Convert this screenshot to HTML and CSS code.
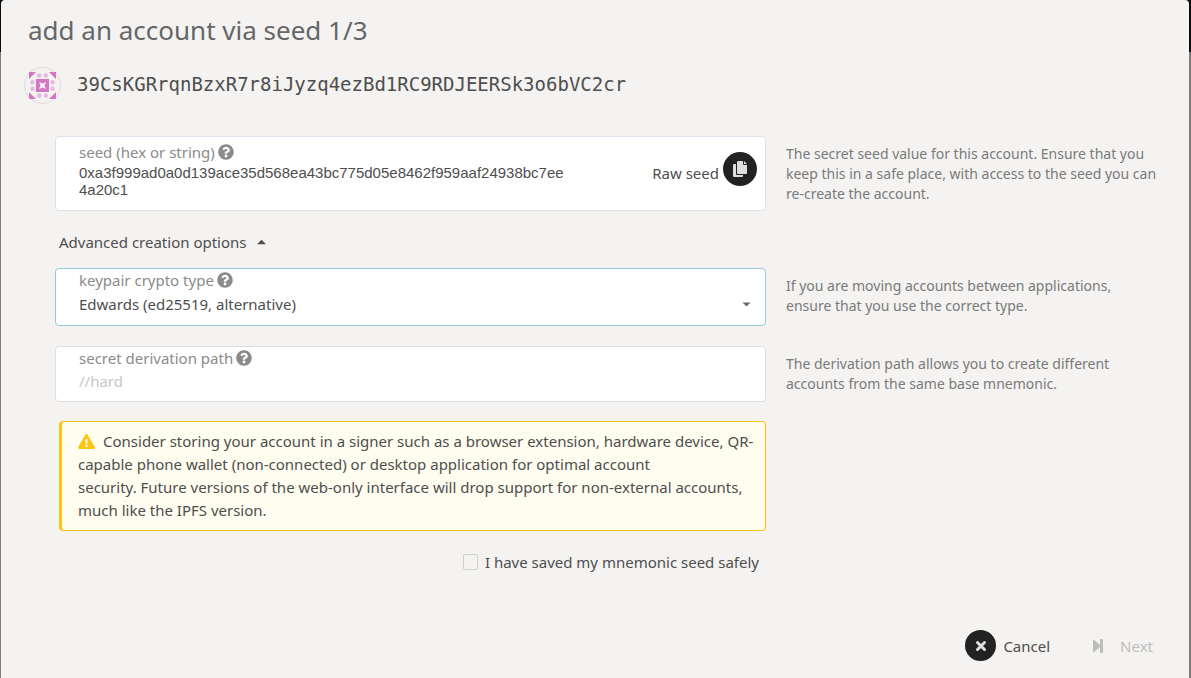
FILE: index.html
```html
<!DOCTYPE html>
<html lang="en">
<head>
<meta charset="utf-8">
<title>Add an account via seed</title>
<link rel="stylesheet" href="styles.css">
</head>
<body>
<svg class="defs" width="0" height="0" aria-hidden="true">
  <symbol id="help" viewBox="0 0 512 512"><path fill="currentColor" d="M504 256c0 137-111 248-248 248S8 393 8 256 119 8 256 8s248 111 248 248zM262.700 90c-54.500 0-89.300 23-116.500 63.800-3.500 5.300-2.400 12.400 2.700 16.300l34.700 26.300c5.200 3.900 12.600 3 16.700-2.100 17.900-22.700 30.100-35.800 57.300-35.800 20.400 0 45.700 13.100 45.700 33 0 15-12.400 22.700-32.500 34C247.100 238.500 216 254.900 216 296v4c0 6.600 5.400 12 12 12h56c6.600 0 12-5.400 12-12v-1.300c0-28.500 83.200-29.600 83.200-106.700 0-58-60.200-102-116.500-102zM256 338c-25.400 0-46 20.600-46 46s20.600 46 46 46 46-20.600 46-46-20.600-46-46-46z"/></symbol>
</svg>
<main class="dialog">
  <h1 class="title">add an account via seed 1/3</h1>
  <div class="account">
    <svg class="identicon" viewBox="0 0 37 37" aria-hidden="true">
      <circle cx="18.500" cy="18.500" r="18" fill="#f4f3f1" stroke="#dddcda"/>
      <g fill="#d376c3"><path d="M5 5h7L5 12zM32 5v7l-7-7zM5 32v-7l7 7zM32 32h-7l7-7z"/><path d="M12 12h13v13H12z"/></g>
      <g fill="#e6b8e2"><circle cx="15.300" cy="8.500" r="2.200"/><circle cx="21.800" cy="8.500" r="2.200"/><circle cx="15.300" cy="28.500" r="2.200"/><circle cx="21.800" cy="28.500" r="2.200"/><circle cx="8.500" cy="15.300" r="2.200"/><circle cx="8.500" cy="21.800" r="2.200"/><circle cx="28.500" cy="15.300" r="2.200"/><circle cx="28.500" cy="21.800" r="2.200"/></g>
      <path fill="#fbeef8" d="M15 15l3.500 1.500L22 15l-1.500 3.500L22 22l-3.500-1.500L15 22l1.500-3.500z"/>
    </svg>
    <span class="address">39CsKGRrqnBzxR7r8iJyzq4ezBd1RC9RDJEERSk3o6bVC2cr</span>
  </div>
  <form class="form">
    <div class="row">
      <div class="field seed">
        <div class="seed-main">
          <label class="label" for="seed">seed (hex or string) <svg class="help"><use href="#help"/></svg></label>
          <textarea class="seed-value" id="seed" rows="2" spellcheck="false">0xa3f999ad0a0d139ace35d568ea43bc775d05e8462f959aaf24938bc7ee4a20c1</textarea>
        </div>
        <span class="seed-kind">Raw seed</span>
        <button class="round" type="button" aria-label="Copy seed">
          <svg class="copy" viewBox="0 0 16 18"><path fill="#dededc" d="M2 4h2v10q0 1 1 1h6v1q0 1-1 1H2q-1 0-1-1V5q0-1 1-1z"/><path fill="#dededc" d="M6 1h5v3q0 1 1 1h3v8q0 1-1 1H6q-1 0-1-1V2q0-1 1-1z"/><path fill="#dededc" d="M12 1l3 3h-3z"/></svg>
        </button>
      </div>
      <p class="hint">The secret seed value for this account. Ensure that you<br>keep this in a safe place, with access to the seed you can<br>re-create the account.</p>
    </div>
    <button class="advanced" type="button">Advanced creation options <svg class="caret" viewBox="0 0 10 6"><path fill="currentColor" d="M0 5.500L5 0.500l5 5z"/></svg></button>
    <div class="row">
      <div class="field active">
        <label class="label" for="crypto">keypair crypto type <svg class="help"><use href="#help"/></svg></label>
        <div class="pick">
          <select class="control" id="crypto"><option>Edwards (ed25519, alternative)</option></select>
          <svg class="arrow" viewBox="0 0 8 5"><path fill="currentColor" d="M0 0.500h8L4 4.500z"/></svg>
        </div>
      </div>
      <p class="hint">If you are moving accounts between applications,<br>ensure that you use the correct type.</p>
    </div>
    <div class="row path-row">
      <div class="field">
        <label class="label" for="path">secret derivation path <svg class="help"><use href="#help"/></svg></label>
        <input class="control" id="path" type="text" placeholder="//hard">
      </div>
      <p class="hint">The derivation path allows you to create different<br>accounts from the same base mnemonic.</p>
    </div>
    <div class="row last">
      <div class="side">
        <p class="warning"><svg class="alert" viewBox="0 0 17 15"><path fill="#ffc40c" d="M7.300.7a1.400 1.400 0 0 1 2.400 0l7 12.200a1.400 1.400 0 0 1-1.200 2.100h-14a1.400 1.400 0 0 1-1.200-2.100z"/><path fill="#fffdf0" d="M7.300 5h2.400l-.3 4.800H7.600z"/><circle cx="8.500" cy="11.900" r="1.300" fill="#fffdf0"/></svg>Consider storing your account in a signer such as a browser extension, hardware device, QR-<br>capable phone wallet (non-connected) or desktop application for optimal account<br>security. Future versions of the web-only interface will drop support for non-external accounts,<br>much like the IPFS version.</p>
        <label class="confirm"><input class="check" type="checkbox">I have saved my mnemonic seed safely</label>
      </div>
    </div>
  </form>
  <div class="actions">
    <button class="action" type="button"><span class="round small"><svg class="cross" viewBox="0 0 12 12"><path fill="none" stroke="#dededc" stroke-width="3" stroke-linecap="round" d="M2.500 2.500l7 7m0-7l-7 7"/></svg></span>Cancel</button>
    <button class="action next" type="button" disabled><svg class="step" viewBox="0 0 12 14"><path fill="currentColor" d="M1 1.500Q1 0 2.300 1L8 6V1q0-1 1-1h1q1 0 1 1v12q0 1-1 1H9q-1 0-1-1V8l-5.700 5Q1 14 1 12.500z"/></svg>Next</button>
  </div>
</main>
</body>
</html>
```

FILE: styles.css
```css
* {
  box-sizing: border-box;
}

body {
  margin: 0;
  padding: 0 2px 0 1px;
  background: linear-gradient(#0b0d10 52px, #7d7c7b 52px);
  color: #4e4e4e;
  font: 15px/20px "Noto Sans", "Open Sans", sans-serif;
}

button,
select,
input {
  font: inherit;
  color: inherit;
}

button {
  border: 0;
  padding: 0;
  background: none;
}

p,
h1 {
  margin: 0;
}

svg {
  flex: none;
}

.defs {
  position: absolute;
}

.dialog {
  display: flex;
  flex-direction: column;
  min-height: 100vh;
  padding: 12px 20px 17px 23px;
  border-radius: 4px 4px 0 0;
  background: #f4f3f1;
}

.title {
  padding-left: 4px;
  font-size: 26px;
  font-weight: 400;
  line-height: 36px;
  color: #666;
}

.account {
  display: flex;
  align-items: center;
  gap: 16px;
  margin-top: 19px;
}

.identicon {
  width: 37px;
  height: 37px;
}

.address {
  padding-bottom: 3px;
  font: 19px/28px "DejaVu Sans Mono", monospace;
}

.form {
  display: flex;
  flex-direction: column;
  margin: 32px 0 0 31px;
}

.row {
  display: grid;
  grid-template-columns: 711fr 383fr;
  gap: 20px;
}

.field {
  padding: 1px 14px 7px 23px;
  border: 1px solid #dededf;
  border-radius: 4px;
  background: #fff;
}

.active {
  border-color: #96c8da;
  padding-bottom: 9px;
}

.label {
  display: flex;
  align-items: center;
  gap: 3px;
  line-height: 20px;
  color: #8b8b8b;
}

.help {
  width: 16px;
  height: 16px;
}

.control {
  display: block;
  width: 100%;
  height: 26px;
  border: 0;
  padding: 0;
  background: none;
  appearance: none;
  outline: 0;
}

.control::placeholder {
  color: #c7c7c7;
}

.pick {
  display: flex;
  align-items: center;
  padding-top: 1px;
  margin-bottom: -1px;
}

.arrow {
  width: 9px;
  height: 5px;
  color: #6a6a6a;
}

.seed {
  display: flex;
  align-items: center;
  min-height: 75px;
  padding: 0 8px 2px 23px;
  border-color: #dde1eb;
}

.seed-main {
  flex: 1;
  padding-bottom: 6px;
}

.seed-value {
  display: block;
  width: 490px;
  max-width: 100%;
  height: 36px;
  border: 0;
  padding: 2px 0 0;
  background: none;
  color: inherit;
  font: 15px/17px "Liberation Sans", sans-serif;
  resize: none;
  overflow: hidden;
}

.seed-kind {
  margin-right: 4px;
}

.round {
  display: flex;
  align-items: center;
  justify-content: center;
  width: 34px;
  height: 34px;
  margin-bottom: 8px;
  border-radius: 50%;
  background: #222;
}

.copy {
  width: 16px;
  height: 18px;
}

.hint {
  padding-top: 8px;
  font-size: 14px;
  color: #7a7a7a;
  white-space: nowrap;
}

.advanced {
  display: flex;
  align-items: center;
  align-self: flex-start;
  gap: 10px;
  margin: 21px 0 16px 4px;
}

.caret {
  width: 9px;
  height: 6px;
}

.path-row {
  margin-top: 20px;
}

.last {
  margin-top: 19px;
}

.side {
  display: flex;
  flex-direction: column;
  padding-left: 4px;
}

.warning {
  padding: 8px 0 8px 16px;
  border: 1px solid #ffc40c;
  border-left-width: 3px;
  border-radius: 4px;
  background: #fffdf0;
  line-height: 23px;
  white-space: nowrap;
}

.alert {
  width: 17px;
  height: 15px;
  margin-right: 8px;
  vertical-align: -2px;
}

.confirm {
  display: flex;
  align-items: center;
  align-self: flex-end;
  gap: 7px;
  margin: 21px 7px 0 0;
}

.check {
  width: 15px;
  height: 16px;
  margin: 0;
  border: 1px solid #cfcfce;
  border-radius: 2px;
  appearance: none;
}

.actions {
  display: flex;
  justify-content: flex-end;
  gap: 42px;
  margin-top: auto;
  padding-right: 16px;
}

.action {
  display: flex;
  align-items: center;
  gap: 7px;
}

.small {
  width: 31px;
  height: 31px;
  margin: 0;
}

.cross {
  width: 12px;
  height: 12px;
}

.next {
  gap: 16px;
  color: #bdbdbc;
}

.step {
  width: 12px;
  height: 14px;
}
```
